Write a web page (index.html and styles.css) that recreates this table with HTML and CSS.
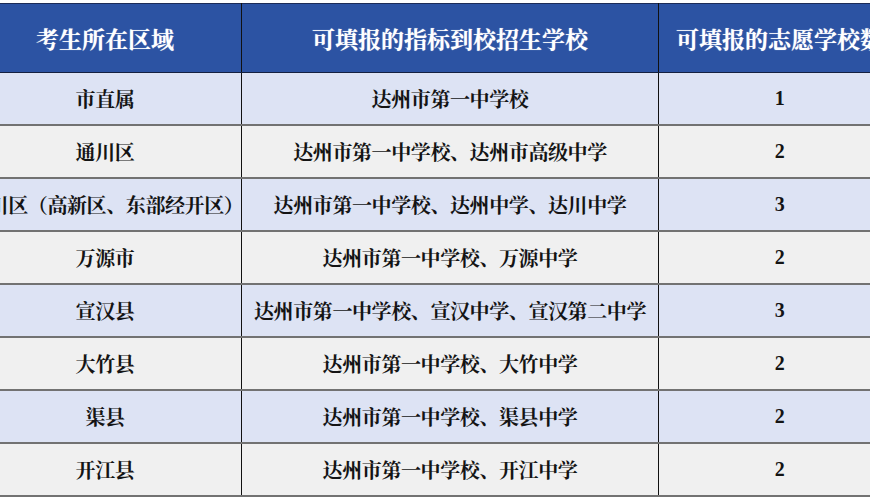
FILE: index.html
```html
<!DOCTYPE html>
<html lang="zh-CN">
<head>
<meta charset="utf-8">
<link rel="stylesheet" href="styles.css">
</head>
<body>
<div class="wrap">
<table class="tbl">
<colgroup><col class="c1"><col class="c2"><col class="c3"></colgroup>
<thead>
<tr><th>考生所在区域</th><th>可填报的指标到校招生学校</th><th>可填报的志愿学校数</th></tr>
</thead>
<tbody>
<tr class="odd"><td>市直属</td><td>达州市第一中学校</td><td class="num">1</td></tr>
<tr class="even"><td>通川区</td><td>达州市第一中学校、达州市高级中学</td><td class="num">2</td></tr>
<tr class="odd"><td>达川区（高新区、东部经开区）</td><td>达州市第一中学校、达州中学、达川中学</td><td class="num">3</td></tr>
<tr class="even"><td>万源市</td><td>达州市第一中学校、万源中学</td><td class="num">2</td></tr>
<tr class="odd"><td>宣汉县</td><td>达州市第一中学校、宣汉中学、宣汉第二中学</td><td class="num">3</td></tr>
<tr class="even"><td>大竹县</td><td>达州市第一中学校、大竹中学</td><td class="num">2</td></tr>
<tr class="odd"><td>渠县</td><td>达州市第一中学校、渠县中学</td><td class="num">2</td></tr>
<tr class="even"><td>开江县</td><td>达州市第一中学校、开江中学</td><td class="num">2</td></tr>
</tbody>
</table>
</div>
</body>
</html>
```
FILE: styles.css
```css
html, body {
  margin: 0;
  padding: 0;
  background: #ffffff;
  width: 870px;
  height: 500px;
  overflow: hidden;
}
.wrap {
  width: 870px;
  height: 500px;
  overflow: hidden;
  padding-top: 3px;
  box-sizing: border-box;
}
.tbl {
  margin-left: -32px;
  width: 932px;
  table-layout: fixed;
  border-collapse: collapse;
  font-family: "Noto Serif CJK SC", "Source Han Serif SC", "Liberation Serif", "Noto Sans CJK SC", serif;
  font-weight: bold;
  color: #141414;
}
.c1 { width: 273px; }
.c2 { width: 417px; }
.c3 { width: 242px; }
.tbl th {
  height: 68px;
  padding: 0;
  background: #2c53a3;
  color: #ffffff;
  font-size: 23px;
  font-weight: bold;
  text-align: center;
  white-space: nowrap;
  overflow: hidden;
  border-top: 1px solid #1c2c58;
  border-bottom: 1px solid #14203f;
  border-left: 1.5px solid #111;
  border-right: 1.5px solid #111;
  text-shadow: 0 0 1px rgba(255,255,255,0.6);
}
.tbl td {
  height: 51px;
  padding: 0;
  font-size: 20px;
  text-align: center;
  white-space: nowrap;
  overflow: visible;
  border-left: 1.5px solid #111;
  border-right: 1.5px solid #111;
  border-bottom: 2px solid #727272;
  letter-spacing: -0.4px;
}
.tbl td.num {
  font-family: "Liberation Serif", serif;
  font-size: 20px;
}
.odd td { background: #dde3f4; }
.even td { background: #f0f0f0; }
```
